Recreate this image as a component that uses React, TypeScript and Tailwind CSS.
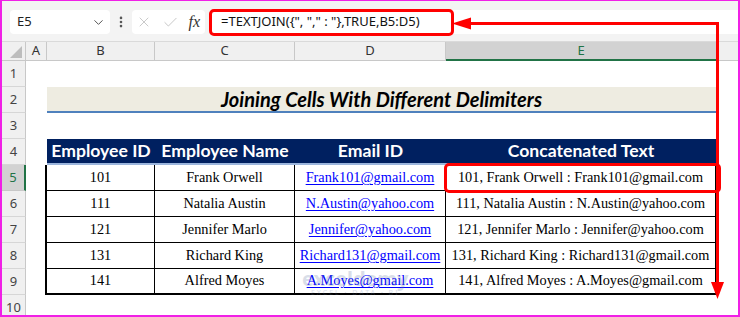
import { ChevronDown, X, Check, EllipsisVertical } from "lucide-react";

const rows = [
  { id: "101", name: "Frank Orwell", email: "Frank101@gmail.com" },
  { id: "111", name: "Natalia Austin", email: "N.Austin@yahoo.com" },
  { id: "121", name: "Jennifer Marlo", email: "Jennifer@yahoo.com" },
  { id: "131", name: "Richard King", email: "Richard131@gmail.com" },
  { id: "141", name: "Alfred Moyes", email: "A.Moyes@gmail.com" },
];

const ui = { fontFamily: '"Noto Sans", "Open Sans", sans-serif' };
const serif = { fontFamily: '"Liberation Serif", "Times New Roman", serif' };
const heading = { fontFamily: 'Lato, "Open Sans", sans-serif' };

const RowHead = ({ n, active }: { n: number; active?: boolean }) => (
  <div
    className={
      active
        ? "flex items-center justify-center bg-[#d2d2d2] border-r-2 border-r-[#217346] border-b border-b-[#c8c8c8] text-[13px] text-[#217346]"
        : "flex items-center justify-center bg-[#f0f0f0] border-r border-r-[#c8c8c8] border-b border-b-[#d6d6d6] text-[13px] text-[#444]"
    }
    style={ui}
  >
    {n}
  </div>
);

const Blank = () => <div className="bg-white" />;

export default function App() {
  return (
    <div className="relative w-[740px] h-[317px] overflow-hidden bg-white border-l-2 border-r-2 border-b-2 border-t border-[#f020e6]">
      {/* formula bar */}
      <div className="h-[41px] bg-[#f3f3f3] flex items-start pt-[9px] pl-[8px] border-b border-[#dadada]" style={ui}>
        <div className="w-[100px] h-[24px] bg-white rounded-[4px] flex items-center justify-between pl-[7px] pr-[4px] text-[13px] text-[#222]">
          <span>E5</span>
          <ChevronDown size={15} strokeWidth={1.6} className="text-[#555]" />
        </div>
        <div className="w-[22px] h-[24px] flex items-center justify-center text-[#555]">
          <EllipsisVertical size={14} strokeWidth={2.5} />
        </div>
        <div className="w-[73px] h-[24px] bg-white rounded-[4px] flex items-center justify-between pl-[4px] pr-[5px]">
          <X size={16} strokeWidth={1.3} className="text-[#c2c2c2]" />
          <Check size={17} strokeWidth={1.3} className="text-[#c2c2c2]" />
          <span className="text-[16px] italic text-[#333]" style={serif}>
            fx
          </span>
        </div>
        <div className="flex-1 ml-[4px] h-[24px] bg-white rounded-l-[4px] flex items-center pl-[12px] text-[13px] text-[#111]" style={ui}>
          {'=TEXTJOIN({", "," : "},TRUE,B5:D5)'}
        </div>
      </div>

      {/* sheet */}
      <div className="grid grid-cols-[24px_21px_108px_140px_151px_270px_1fr] grid-rows-[19px_repeat(9,26px)_26px]">
        {/* column headers */}
        <div className="relative bg-[#f0f0f0] border-r border-b border-[#c8c8c8]">
          <div className="absolute right-[3px] bottom-[2px] w-0 h-0 border-l-[12px] border-l-transparent border-b-[12px] border-b-[#bdbdbd]" />
        </div>
        {["A", "B", "C", "D"].map((c) => (
          <div
            key={c}
            className="flex items-center justify-center bg-[#f0f0f0] border-r border-b border-[#c8c8c8] text-[13px] text-[#333]"
            style={ui}
          >
            {c}
          </div>
        ))}
        <div className="flex items-center justify-center bg-[#d2d2d2] border-b-2 border-[#217346] text-[13px] text-[#217346]" style={ui}>
          E
        </div>
        <div className="bg-[#f0f0f0] border-l border-b border-[#c8c8c8]" />

        {/* row 1 */}
        <RowHead n={1} />
        <Blank />
        <div className="col-span-4" />
        <Blank />

        {/* row 2 title */}
        <RowHead n={2} />
        <Blank />
        <div
          className="col-span-4 flex items-center justify-center bg-[#eeece1] border-b-2 border-[#4f81bd] text-[20px] font-bold italic text-black whitespace-nowrap"
          style={heading}
        >
          Joining Cells With Different Delimiters
        </div>
        <Blank />

        {/* row 3 */}
        <RowHead n={3} />
        <Blank />
        <div className="col-span-4" />
        <Blank />

        {/* row 4 header */}
        <RowHead n={4} />
        <Blank />
        {["Employee ID", "Employee Name", "Email ID", "Concatenated Text"].map((h) => (
          <div
            key={h}
            className="flex items-center justify-center bg-[#002060] border-b-2 border-[#9bb5dc] text-[17.6px] font-bold text-white whitespace-nowrap"
            style={heading}
          >
            {h}
          </div>
        ))}
        <Blank />

        {/* data */}
        {rows.map((r, i) => {
          const last = i === rows.length - 1;
          const cell =
            "flex items-center justify-center border-r border-black text-[14.3px] text-black whitespace-nowrap " +
            (last ? "border-b-2" : "border-b");
          return [
            <RowHead key={`h${i}`} n={5 + i} active={i === 0} />,
            <Blank key={`a${i}`} />,
            <div key={`b${i}`} className={cell + " border-l-2 -ml-[2px]"} style={serif}>
              {r.id}
            </div>,
            <div key={`c${i}`} className={cell} style={serif}>
              {r.name}
            </div>,
            <div key={`d${i}`} className={cell} style={serif}>
              <span className="text-[#0000ff] underline underline-offset-2">{r.email}</span>
            </div>,
            <div key={`e${i}`} className={cell} style={serif}>
              {`${r.id}, ${r.name} : ${r.email}`}
            </div>,
            <Blank key={`f${i}`} />,
          ];
        })}

        {/* row 10 */}
        <RowHead n={10} />
        <Blank />
        <div className="col-span-4" />
        <Blank />
      </div>

      {/* watermark */}
      <div className="pointer-events-none absolute left-[300px] top-[268px] flex flex-col items-center opacity-25 text-[#6b7fa8]" style={ui}>
        <span className="text-[20px] font-bold leading-[20px]">exceldemy</span>
        <span className="text-[7px] tracking-[2px] leading-[8px]">EXCEL · DATA · BI</span>
      </div>

      {/* formula highlight */}
      <div className="pointer-events-none absolute left-[207px] top-[8px] w-[245px] h-[27px] border-[3px] border-[#ff0000] rounded-[5px]" />

      {/* E5 highlight */}
      <div className="pointer-events-none absolute left-[442px] top-[162px] w-[277px] h-[30px] border-[3px] border-[#ff0000] rounded-[5px]" />

      {/* arrow */}
      <svg
        className="pointer-events-none absolute -left-[2px] -top-[1px]"
        width={740}
        height={317}
        viewBox="0 0 740 317"
      >
        <polyline points="717.5,284 717.5,23.5 469,23.5" fill="none" stroke="#ff0000" strokeWidth={3} />
        <polygon points="452,23.5 471,17.5 471,29.5" fill="#ff0000" />
        <polygon points="717.5,299 711,282 724,282" fill="#ff0000" />
      </svg>
    </div>
  );
}
